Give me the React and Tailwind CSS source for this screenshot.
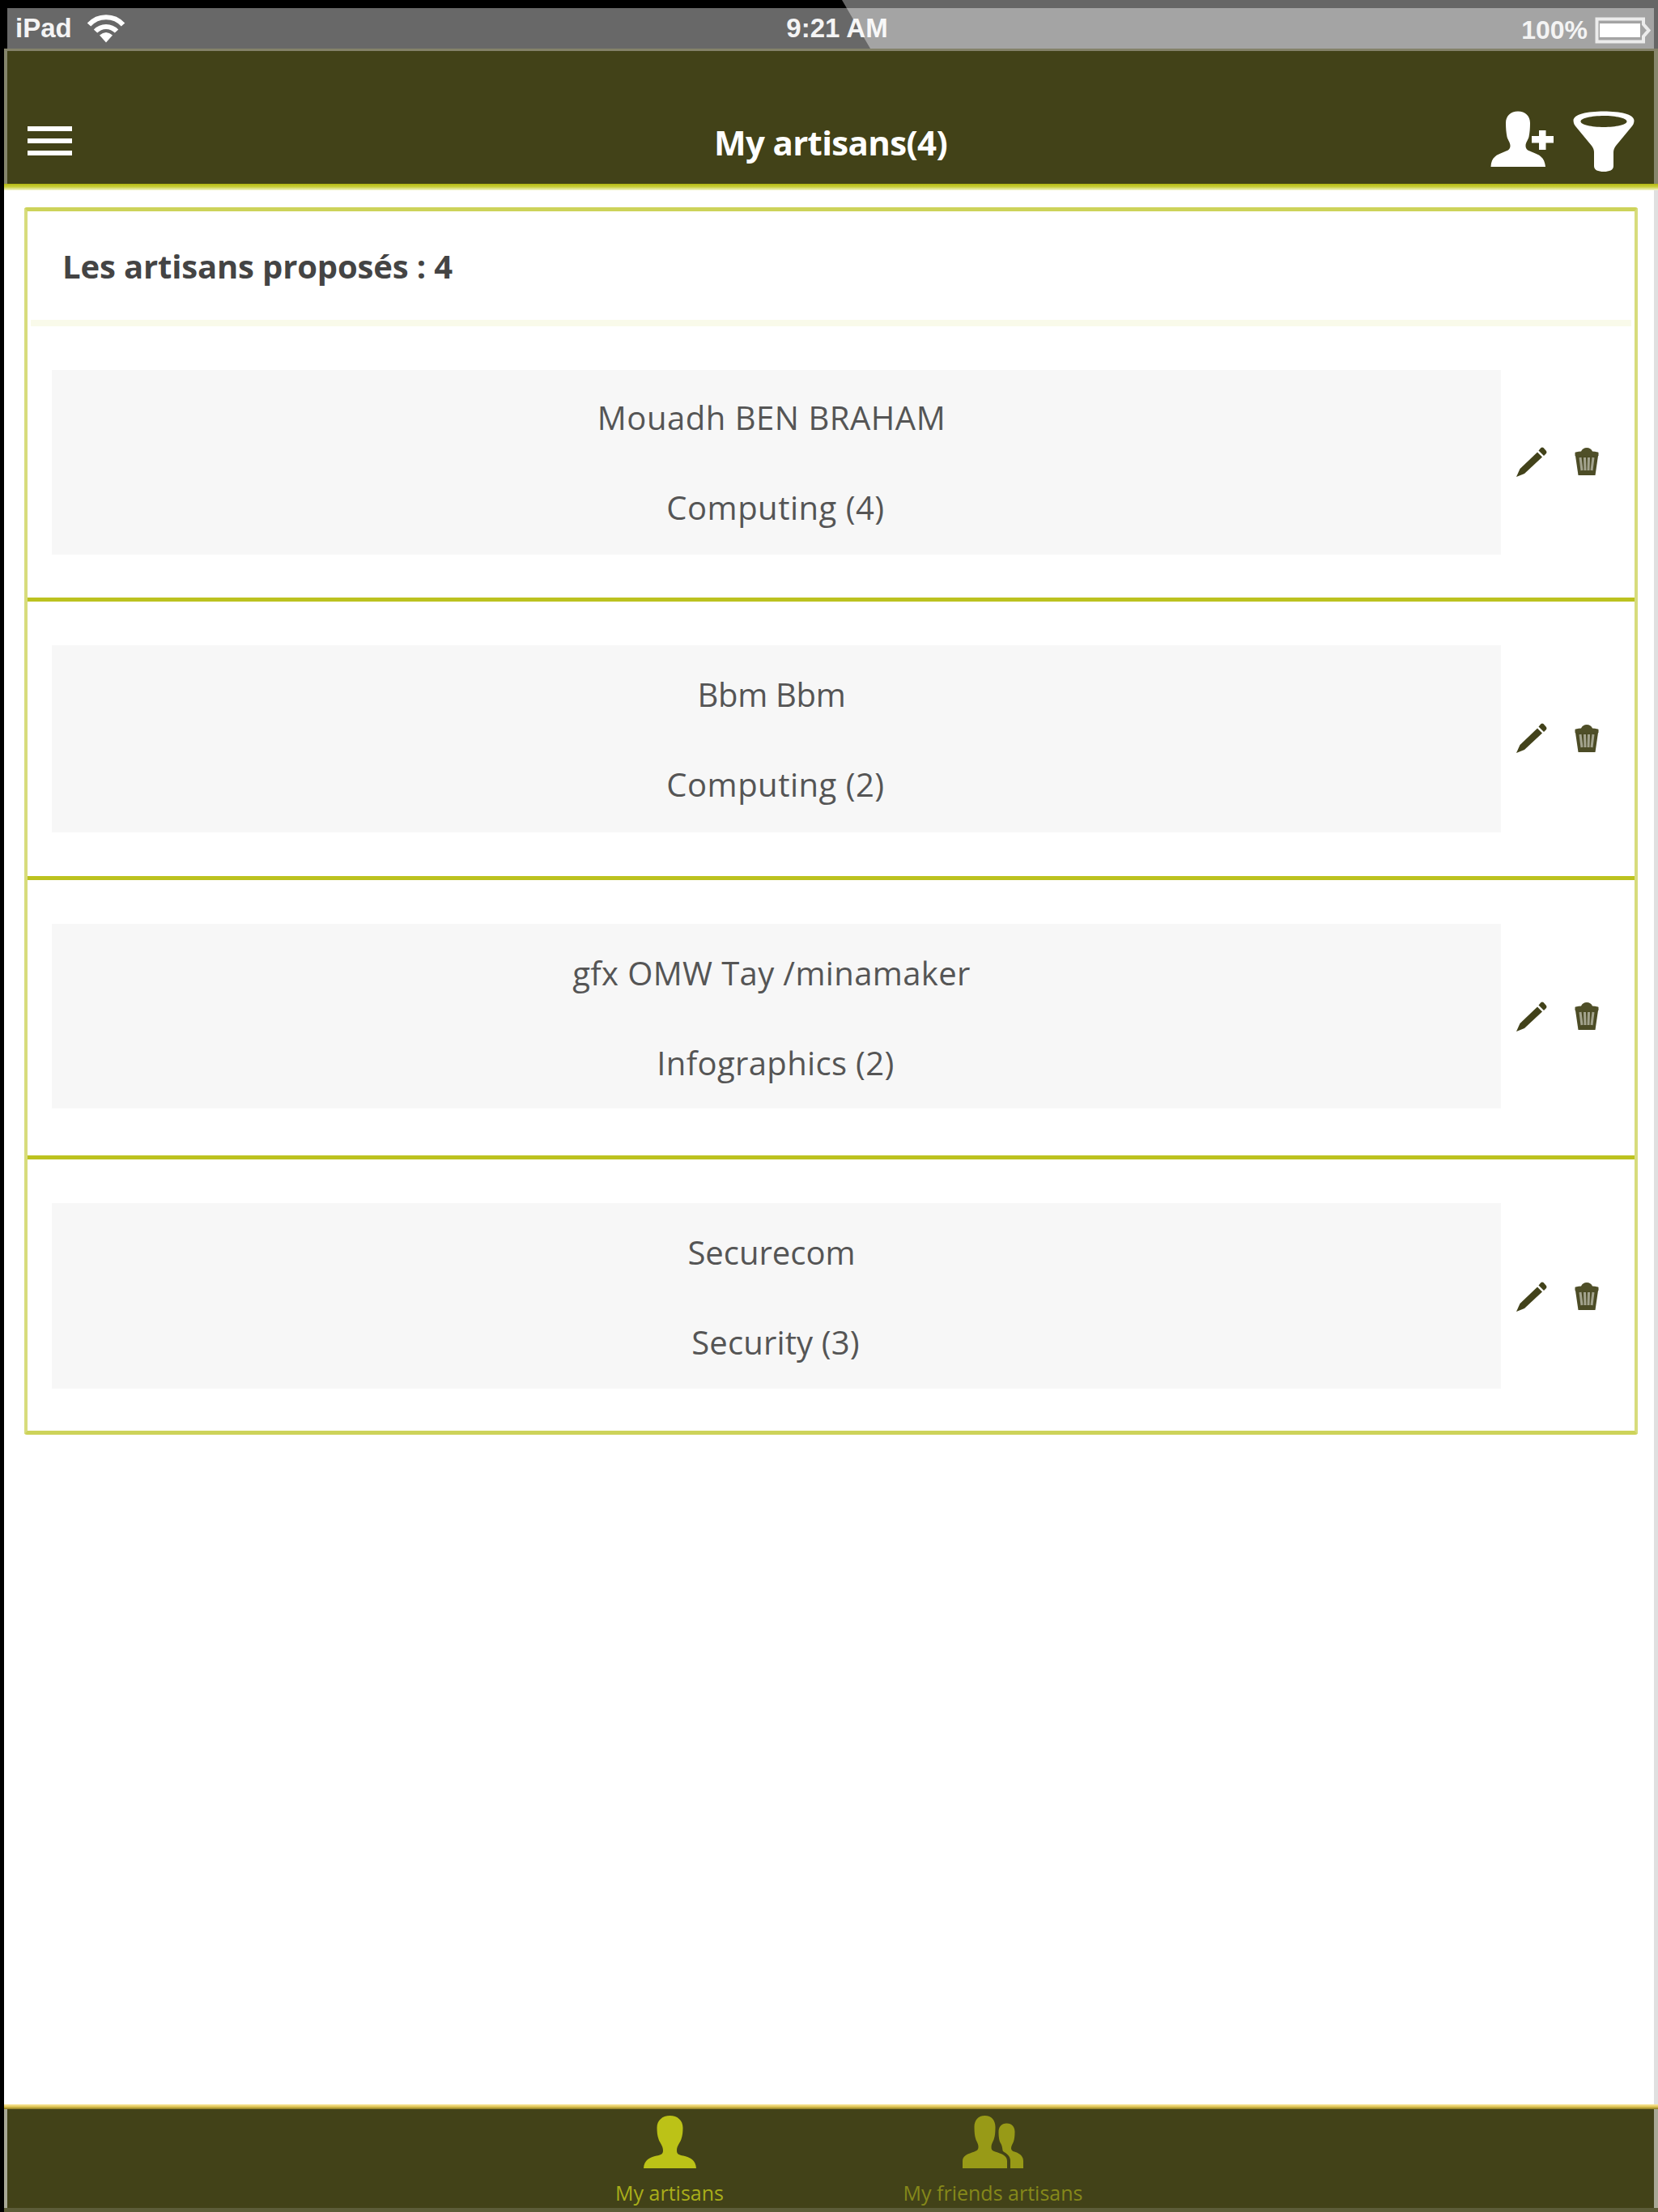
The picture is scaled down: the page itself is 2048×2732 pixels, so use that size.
const artisans = [
  { name: "Mouadh BEN BRAHAM", job: "Computing (4)", row: "h-[340px] border-b-[5px]", box: "h-[228px] pt-[29px]", actions: "h-[226px]", nameTrack: "tracking-[0.53px]", jobTrack: "tracking-[0.5px]" },
  { name: "Bbm Bbm", job: "Computing (2)", row: "h-[344px] border-b-[5px]", box: "h-[231px] pt-[31px]", actions: "h-[229px]", nameTrack: "tracking-[-0.3px]", jobTrack: "tracking-[0.5px]" },
  { name: "gfx OMW Tay /minamaker", job: "Infographics (2)", row: "h-[345px] border-b-[5px]", box: "h-[228px] pt-[31px]", actions: "h-[228px]", nameTrack: "tracking-[0.38px]", jobTrack: "tracking-[0.35px]" },
  { name: "Securecom", job: "Security (3)", row: "h-[335px]", box: "h-[229px] pt-[31px]", actions: "h-[230px]", nameTrack: "tracking-[0px]", jobTrack: "tracking-[0.15px]" },
];

function WifiIcon() {
  return (
    <svg className="h-[36px] w-[48px]" viewBox="0 0 48 36" fill="none" stroke="white" strokeWidth="6">
      <path d="M3 13.500C14 1 34 1 45 13.500" />
      <path d="M11 21.500C18 14 30 14 37 21.500" />
      <path d="M16 26.500Q24 19.500 32 26.500L24 35.500Z" fill="white" stroke="none" />
    </svg>
  );
}

function BatteryIcon() {
  return (
    <svg className="h-[33px] w-[69px]" viewBox="0 0 69 33">
      <path d="M2.500 2.500H60V9L66.500 16.500L60 24V30.500H2.500Z" fill="none" stroke="#ececec" strokeWidth="4" />
      <rect x="6" y="8" width="50" height="17" fill="white" />
    </svg>
  );
}

function PersonAddIcon() {
  return (
    <svg className="h-[70px] w-[80px]" viewBox="0 0 80 70" fill="white">
      <path d="M35 0.500C44 0.500 50 6 50 15C50 21 49.500 27 48.500 32C47.500 36 44.500 39 44.500 43C44.500 48 48 49 53 51C61 54 68 57 69 69H1.500C2 57 9 54 17 51C22 49 25.500 48 25.500 43C25.500 39 22.500 36 21.500 32C20.500 27 20 21 20 15C20 6 26 0.500 35 0.500Z" />
      <path d="M61 24H69.500V31H79V39.500H69.500V48H61V39.500H52V31H61Z" />
    </svg>
  );
}

function FunnelIcon() {
  return (
    <svg className="h-[76px] w-[78px]" viewBox="0 0 78 76" fill="white" fillRule="evenodd">
      <path d="M39 0.500C59 0.500 76.500 4 76.500 12C76.500 15 75 18 73 20L54 43C52 46 51 48 51 51V68C51 73 46 75 39 75C32 75 27 73 27 68V51C27 48 26 46 24 43L5 20C3 18 1.500 15 1.500 12C1.500 4 19 0.500 39 0.500ZM39 6C24 6 10.500 9 10.500 13C10.500 17 24 20 39 20C54 20 67.500 17 67.500 13C67.500 9 54 6 39 6Z" />
    </svg>
  );
}

function PencilIcon() {
  return (
    <svg className="h-[39px] w-[40px]" viewBox="0 0 40 39" fill="#42421a">
      <path d="M1 38L5.500 28L27 7.500L33 13.500L11 34Z" />
      <path d="M28.500 5.500L31.500 2Q33 1 34.500 2L38 6Q39 7.500 38 9L35 12Z" />
    </svg>
  );
}

function TrashIcon() {
  return (
    <svg className="h-[36px] w-[30px]" viewBox="0 0 30 36">
      <path d="M0.500 7Q1 6 8 5.500Q10 1 15 1Q20 1 22 5.500Q29 6 29.500 7V11H0.500Z" fill="#4f4f28" />
      <path d="M1 11H29L25.500 35H4.500Z" fill="#4c4c26" />
      <path d="M7 13L9 29M12.500 13L13 29M17.500 13L17 29M23 13L21 29" stroke="#a3a38e" strokeWidth="3" />
    </svg>
  );
}

function PersonIcon() {
  return (
    <svg className="h-[65px] w-[65px]" viewBox="0 0 65 65" fill="#bcc217">
      <path d="M32.500 0C42 0 48.500 6 48.500 15C48.500 20 48 25 46.500 29C45.500 33 41 37 41 43C41 48 44 48.500 49 49.500C57 51 64.500 55 65 65H0C0.500 55 8 51 16 49.500C21 48.500 24 48 24 43C24 37 19.500 33 18.500 29C17 25 16.500 20 16.500 15C16.500 6 23 0 32.500 0Z" />
    </svg>
  );
}

function PeopleIcon() {
  return (
    <svg className="h-[65px] w-[75px]" viewBox="0 0 75 65" fill="#989a17">
      <path d="M27.500 0C36 0 40.500 6 40.500 14C40.500 20 40 25 39 28C38 32 35.500 34 35.500 39C35.500 44 39 44 43.500 45.500C50 48 55 50 55 56V65H0V56C0 50 5 48 11.500 45.500C16 44 19.500 43 19.500 39C19.500 34 17 32 16 28C15 25 14.500 20 14.500 14C14.500 6 19 0 27.500 0Z" />
      <path d="M54.500 9.500C61 9.500 64.500 14 64.500 20C64.500 25 64 29 63 32C62 35 60 37 60 40C60 44 63 44 67 45.500C72 48 75 51 75 56V65H59V55C58.500 50 55 47 50 44C49 42 49.500 38 47 34C45 31 44.500 25 44.500 20C44.500 14 48 9.500 54.500 9.500Z" />
    </svg>
  );
}

function StatusBar() {
  return (
    <div className="relative flex h-[60px] shrink-0 flex-col bg-black pt-[10px] pr-[5px] pl-[9px]">
      <div className="grid h-[50px] grid-cols-3 items-center bg-[#686868] font-['Liberation_Sans',sans-serif] text-[33px] leading-[50px] font-bold text-[#f4f4f4]">
        <div className="flex items-center gap-[18px] pl-[10px]">
          <span>iPad</span>
          <WifiIcon />
        </div>
        <div className="pl-[16px] text-center">9:21 AM</div>
        <div />
      </div>
      <div className="absolute inset-0 bg-white/40 [clip-path:polygon(1040px_0,100%_0,100%_100%,1075px_100%)]" />
      <div className="absolute top-[12px] right-[9px] flex h-[50px] items-center gap-[9px] font-['Liberation_Sans',sans-serif] text-[32px] leading-[50px] font-bold text-[#f4f4f4]">
        <span>100%</span>
        <BatteryIcon />
      </div>
    </div>
  );
}

function Header() {
  return (
    <header className="shrink-0">
      <div className="h-[3px] bg-[#84826a]" />
      <div className="grid h-[164px] grid-cols-[300px_1fr_300px] border-r-[5px] border-l-[4px] border-[#86866c] bg-[#424218]">
        <div className="flex flex-col gap-[9px] pt-[93px] pl-[25px]">
          <span className="h-[6px] w-[55px] bg-white" />
          <span className="h-[6px] w-[55px] bg-white" />
          <span className="h-[6px] w-[55px] bg-white" />
        </div>
        <h1 className="pt-[83px] text-center text-[42px] leading-[60px] font-bold tracking-[-0.65px] text-white">My artisans(4)</h1>
        <div className="flex justify-end gap-[22px] pt-[74px] pr-[23px]">
          <PersonAddIcon />
          <FunnelIcon />
        </div>
      </div>
      <div className="h-[8px] bg-linear-to-b from-[#b3b80c] via-[#cbd03c] to-[#f4f5cc]" />
    </header>
  );
}

function ArtisanRow({ artisan }) {
  return (
    <li className={`flex border-[#bcc21f] pt-[54px] pl-[30px] ${artisan.row}`}>
      <div className={`w-[1790px] bg-[#f7f7f7] text-center text-[40px] leading-[60px] text-[#555] ${artisan.box}`}>
        <p className={`pr-[12px] ${artisan.nameTrack}`}>{artisan.name}</p>
        <p className={`mt-[51px] pr-[2px] ${artisan.jobTrack}`}>{artisan.job}</p>
      </div>
      <div className={`flex items-center gap-[33px] pl-[18px] ${artisan.actions}`}>
        <PencilIcon />
        <TrashIcon />
      </div>
    </li>
  );
}

function TabBar() {
  return (
    <nav className="shrink-0">
      <div className="h-[6px] bg-linear-to-b from-[#fbe9a0] via-[#e0c552] to-[#8a7a22]" />
      <div className="flex h-[122px] justify-center gap-[222px] border-r-[5px] border-l-[4px] border-[#a8a896] bg-[#424218] pt-[8px] pl-[45px] text-[25px] leading-[36px]">
        <div className="flex w-[134px] flex-col items-center gap-[12px] text-[#a9ae1a]">
          <PersonIcon />
          <span className="whitespace-nowrap">My artisans</span>
        </div>
        <div className="flex w-[221px] flex-col items-center gap-[12px] text-[#85881a]">
          <PeopleIcon />
          <span className="whitespace-nowrap">My friends artisans</span>
        </div>
      </div>
      <div className="h-[5px] bg-[#5c5c38]" />
    </nav>
  );
}

export default function App() {
  return (
    <div className="flex h-[2732px] w-[2048px] flex-col overflow-hidden bg-white font-['Open_Sans','Noto_Sans',sans-serif]">
      <StatusBar />
      <div className="flex min-h-0 flex-1 flex-col border-l-[5px] border-black">
        <Header />
        <main className="flex-1 border-r-[5px] border-[#e0e0e0] pt-[21px] pr-[20px] pl-[25px]">
          <section className="h-[1516px] rounded-[3px] border-x-[4px] border-y-[5px] border-x-[#d7dc7c] border-y-[#cdd35a]">
            <h2 className="h-[134px] pt-[38px] pl-[43px] text-[40px] leading-[60px] font-bold tracking-[-0.15px] text-[#444]">Les artisans proposés : 4</h2>
            <div className="mx-[4px] h-[8px] bg-[#f9faea]" />
            <ul>
              {artisans.map((artisan) => (
                <ArtisanRow key={artisan.name} artisan={artisan} />
              ))}
            </ul>
          </section>
        </main>
        <TabBar />
      </div>
    </div>
  );
}
